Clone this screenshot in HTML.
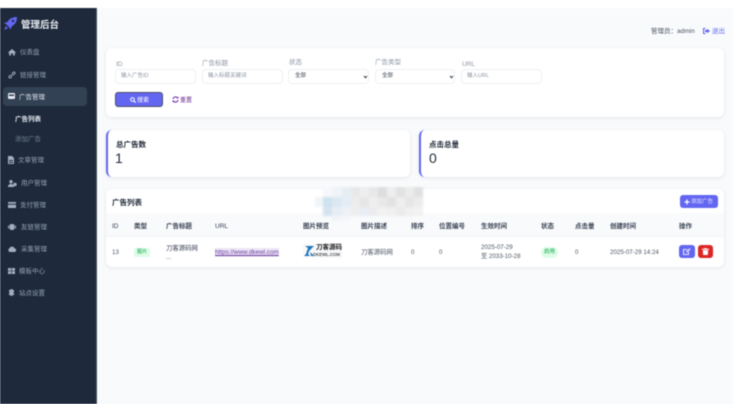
<!DOCTYPE html>
<html lang="zh"><head><meta charset="utf-8"><style>
*{box-sizing:border-box}
html,body{margin:0;padding:0;width:740px;height:404px;overflow:hidden;background:#fff}
body{font-family:"Liberation Sans","Noto Sans CJK SC",sans-serif;position:relative}
.a{position:absolute;white-space:nowrap}
#root{position:absolute;inset:0;filter:blur(.4px)}
.side{position:absolute;left:0;top:8px;width:97px;height:396px;background:#1e293b;border-right:1px solid #4b5563}
.main{position:absolute;left:97px;top:8px;width:636px;height:396px;background:#f8fafc}
.card{position:absolute;background:#fff;border-radius:6px;box-shadow:0 1px 4px rgba(0,0,0,.09)}
.nav{position:absolute;font-size:6.5px;line-height:10px;color:#94a3b8;white-space:nowrap}
.ic{position:absolute;fill:#a3afc0}
.lb{position:absolute;font-size:6.5px;color:#8b95a5;line-height:9px;white-space:nowrap}
.inp{position:absolute;top:69px;height:15px;background:#fff;border:1px solid #edf0f4;border-radius:4px;font-size:5.5px;line-height:13px;color:#8a93a0;padding-left:5px;white-space:nowrap}
.th{position:absolute;top:222px;font-size:6.5px;line-height:10px;color:#374151;font-weight:700;white-space:nowrap}
.td{position:absolute;font-size:6.2px;line-height:10px;color:#4b5563;white-space:nowrap}
</style></head><body><div id="root">
<div class="main"></div>
<div class="side"></div>

<svg class="a" style="left:3px;top:16px" width="15" height="15" viewBox="0 0 15 15"><path d="M14 1C9 1 6 3 4.500 6L1 7l2.500 1.500L6 11l1.500 2.500L9 10c3-1.500 5-4 5-9z" fill="#6366f1"/><circle cx="10" cy="5" r="1.200" fill="#1e293b"/><path d="M3 10l-2 4 4-2z" fill="#6366f1"/></svg>
<div class="a" style="left:21px;top:19px;font-size:9.500px;line-height:14px;color:#e8edf3;font-weight:700">管理后台</div>

<svg class="ic" style="left:8px;top:48px" width="8" height="8" viewBox="0 0 8 8"><path d="M4 1L0 4.500l.6.6L1.200 4.600V7.500H3V5.500H5V7.500H6.800V4.600l.6.500.6-.6z"/></svg>
<div class="nav" style="left:20px;top:48px">仪表盘</div>
<svg class="ic" style="left:8px;top:71px" width="8" height="8" viewBox="0 0 8 8"><path d="M3 5L5 3M2.500 4L1.300 5.200a1 1 0 0 0 1.500 1.500L4 5.500M4 2.500L5.200 1.300a1 1 0 0 1 1.500 1.500L5.500 4" fill="none" stroke="#a3afc0" stroke-width="1"/></svg>
<div class="nav" style="left:20px;top:71px">链接管理</div>

<div class="a" style="left:3px;top:87px;width:84px;height:19px;background:#334155;border-radius:4px"></div>
<svg class="a" style="left:8px;top:93px" width="7" height="6" viewBox="0 0 7 6"><rect width="7" height="6" rx="1" fill="#e5e9ef"/><rect x="1" y="1.500" width="5" height="1.500" fill="#334155"/></svg>
<div class="nav" style="left:19px;top:93px;color:#e2e8f0">广告管理</div>
<div class="nav" style="left:15px;top:115px;color:#e2e8f0;font-weight:700">广告列表</div>
<div class="nav" style="left:15px;top:135px;color:#6f7f95">添加广告</div>

<svg class="ic" style="left:8px;top:156px" width="6" height="8" viewBox="0 0 6 8"><path d="M0 0H4L6 2V8H0zM1 4V5H5V4zM1 6V7H5V6z"/></svg>
<div class="nav" style="left:18px;top:156px">文章管理</div>
<svg class="ic" style="left:8px;top:180px" width="9" height="7" viewBox="0 0 9 7"><circle cx="3" cy="1.700" r="1.700"/><path d="M0 7C0 4.500 1.500 4 3 4S6 4.500 6 7z"/><circle cx="7" cy="4.500" r="1.700"/></svg>
<div class="nav" style="left:21px;top:179px">用户管理</div>
<svg class="ic" style="left:8px;top:202px" width="8" height="6" viewBox="0 0 8 6"><path d="M0 0H8V1.800H0zM0 2.800H8V6H0z"/></svg>
<div class="nav" style="left:20px;top:201px">支付管理</div>
<svg class="ic" style="left:8px;top:224px" width="8" height="6" viewBox="0 0 8 6"><rect x="1.500" width="5" height="6" rx="2"/><rect y="1.500" width="1" height="3"/><rect x="7" y="1.500" width="1" height="3"/></svg>
<div class="nav" style="left:21px;top:223px">友链管理</div>
<svg class="ic" style="left:8px;top:246px" width="8" height="6" viewBox="0 0 8 6"><path d="M2 6A2 2 0 0 1 1.500 2.200 2.700 2.700 0 0 1 6.500 2.400 1.800 1.800 0 0 1 6.200 6z"/></svg>
<div class="nav" style="left:21px;top:245px">采集管理</div>
<svg class="ic" style="left:8px;top:268px" width="7" height="6" viewBox="0 0 7 6"><path d="M0 0H3.200V2.700H0zM3.800 0H7V2.700H3.800zM0 3.300H3.200V6H0zM3.800 3.300H7V6H3.800z"/></svg>
<div class="nav" style="left:19px;top:267px">模板中心</div>
<svg class="ic" style="left:8px;top:289px" width="7" height="7" viewBox="0 0 7 7"><path d="M2.800 0H4.200L4.500 1 5.600 .8 6.300 2 5.600 2.800V4.200L6.300 5 5.600 6.200 4.500 6 4.200 7H2.800L2.500 6 1.400 6.200 .7 5 1.400 4.200V2.800L.7 2 1.400 .8 2.500 1z"/></svg>
<div class="nav" style="left:19px;top:289px">站点设置</div>

<div class="a" style="left:651px;top:27px;font-size:6.500px;line-height:10px;color:#4b5563">管理员：admin</div>
<svg class="a" style="left:703px;top:28px" width="7" height="6" viewBox="0 0 7 6"><path d="M2.500 0H0V6H2.500V5H1V1H2.500zM4 .8L7 3 4 5.200V4H2V2H4z" fill="#6366f1"/></svg>
<div class="a" style="left:712px;top:27px;font-size:6.500px;line-height:10px;color:#6366f1">退出</div>

<div class="card" style="left:106px;top:48px;width:618px;height:69px"></div>
<div class="lb" style="left:116px;top:60px">ID</div>
<div class="lb" style="left:202px;top:59px">广告标题</div>
<div class="lb" style="left:289px;top:58px">状态</div>
<div class="lb" style="left:375px;top:58px">广告类型</div>
<div class="lb" style="left:462px;top:60px">URL</div>
<div class="inp" style="left:115px;width:81px">输入广告ID</div>
<div class="inp" style="left:202px;width:81px">输入标题关键词</div>
<div class="inp" style="left:288px;width:81px;color:#374151;padding-left:6px">全部</div>
<div class="inp" style="left:375px;width:80px;color:#374151;padding-left:6px">全部</div>
<div class="inp" style="left:461px;width:81px">输入URL</div>
<svg class="a" style="left:363px;top:75px" width="5" height="4" viewBox="0 0 5 4"><path d="M1 1L2.500 2.700 4 1" fill="none" stroke="#374151" stroke-width="1"/></svg>
<svg class="a" style="left:449px;top:75px" width="5" height="4" viewBox="0 0 5 4"><path d="M1 1L2.500 2.700 4 1" fill="none" stroke="#374151" stroke-width="1"/></svg>

<div class="a" style="left:115px;top:92px;width:48px;height:15px;background:#6366f1;border:1px solid #4a4f6a;border-bottom-width:1.500px;border-radius:3px"></div>
<svg class="a" style="left:130px;top:97px" width="6" height="6" viewBox="0 0 6 6"><circle cx="2.500" cy="2.500" r="1.800" fill="none" stroke="#fff" stroke-width="1"/><path d="M3.800 3.800L5.700 5.700" stroke="#fff" stroke-width="1.100"/></svg>
<div class="a" style="left:137px;top:96px;font-size:6px;line-height:10px;color:#fff">搜索</div>
<svg class="a" style="left:172px;top:96px" width="7" height="7" viewBox="0 0 7 7"><path d="M1 3A2.600 2.600 0 0 1 5.500 1.800M6 4A2.600 2.600 0 0 1 1.500 5.200" fill="none" stroke="#7c2fb0" stroke-width="1.100"/><path d="M4.500 2.500H6.500V.5zM2.500 4.500H.5V6.500z" fill="#7c2fb0"/></svg>
<div class="a" style="left:180px;top:96px;font-size:6px;line-height:10px;color:#6b2d90">重置</div>

<div class="card" style="left:106px;top:130px;width:304px;height:47px;border-left:2px solid #6366f1"></div>
<div class="a" style="left:116px;top:139px;font-size:7.500px;line-height:11px;color:#1f2937;font-weight:700">总广告数</div>
<div class="a" style="left:115px;top:150px;font-size:14px;line-height:17px;color:#1f2937">1</div>
<div class="card" style="left:419px;top:130px;width:305px;height:47px;border-left:2px solid #6366f1"></div>
<div class="a" style="left:429px;top:139px;font-size:7.500px;line-height:11px;color:#1f2937;font-weight:700">点击总量</div>
<div class="a" style="left:429px;top:150px;font-size:14px;line-height:17px;color:#1f2937">0</div>

<div class="card" style="left:106px;top:189px;width:618px;height:78px"></div>
<div class="a" style="left:106px;top:213px;width:618px;height:24px;background:#f8fafc;border-bottom:1px solid #f1f3f6"></div>

<svg class="a" style="left:314px;top:186px" width="112" height="36" viewBox="0 0 112 36"><defs><filter id="b" x="-5%" y="-10%" width="110%" height="120%"><feGaussianBlur stdDeviation="1"/></filter></defs><g filter="url(#b)">
<rect x="9" y="1" width="9" height="10" fill="#f6f8fb"/><rect x="18" y="1" width="10" height="10" fill="#f0f4f8"/><rect x="28" y="1" width="9" height="10" fill="#e6eef5"/><rect x="37" y="1" width="9" height="10" fill="#e8e8e8"/><rect x="46" y="1" width="9" height="10" fill="#eeeeee"/><rect x="55" y="1" width="9" height="10" fill="#e8e8e8"/><rect x="64" y="1" width="9" height="10" fill="#dedede"/><rect x="73" y="1" width="9" height="10" fill="#eeeeee"/><rect x="82" y="1" width="9" height="10" fill="#e2e2e2"/><rect x="91" y="1" width="9" height="10" fill="#ebebeb"/><rect x="100" y="1" width="9" height="10" fill="#e0e0e0"/>
<rect x="1" y="11" width="8" height="10" fill="#f1f5f9"/><rect x="9" y="11" width="9" height="10" fill="#cfe2f0"/><rect x="18" y="11" width="10" height="10" fill="#dbe8f2"/><rect x="28" y="11" width="9" height="10" fill="#e4edf5"/><rect x="37" y="11" width="9" height="10" fill="#ececec"/><rect x="46" y="11" width="9" height="10" fill="#e6e6e6"/><rect x="55" y="11" width="9" height="10" fill="#eeeeee"/><rect x="64" y="11" width="9" height="10" fill="#e8e8e8"/><rect x="73" y="11" width="9" height="10" fill="#e2e2e2"/><rect x="82" y="11" width="9" height="10" fill="#eeeeee"/><rect x="91" y="11" width="9" height="10" fill="#e6e6e6"/><rect x="100" y="11" width="9" height="10" fill="#ececec"/>
<rect x="9" y="21" width="9" height="9" fill="#d5e3ee"/><rect x="18" y="21" width="10" height="9" fill="#e6eef5"/><rect x="28" y="21" width="9" height="9" fill="#eef2f6"/><rect x="37" y="21" width="9" height="9" fill="#eeeeee"/><rect x="46" y="21" width="9" height="9" fill="#e8ecf5"/><rect x="55" y="21" width="9" height="9" fill="#ececec"/><rect x="64" y="21" width="9" height="9" fill="#f2f2f2"/><rect x="73" y="21" width="9" height="9" fill="#f0f0f0"/><rect x="82" y="21" width="9" height="9" fill="#ebebeb"/><rect x="91" y="21" width="9" height="9" fill="#f0f0f0"/><rect x="100" y="21" width="9" height="9" fill="#f2f2f2"/>
<rect x="18" y="30" width="10" height="5" fill="#f1f4f8"/><rect x="28" y="30" width="9" height="5" fill="#f4f6f8"/></g></svg>

<div class="a" style="left:112px;top:197px;font-size:7.500px;line-height:11px;color:#1f2937;font-weight:700">广告列表</div>
<div class="a" style="left:680px;top:195px;width:38px;height:13px;background:#6366f1;border-radius:3px"></div>
<svg class="a" style="left:684px;top:199px" width="6" height="6" viewBox="0 0 6 6"><path d="M3 .5V5.500M.5 3H5.500" stroke="#fff" stroke-width="1.200"/></svg>
<div class="a" style="left:691px;top:197px;font-size:5.500px;line-height:9px;color:#e6e7ff;margin-top:.5px">添加广告</div>

<div class="th" style="left:112px;font-weight:400">ID</div>
<div class="th" style="left:134px">类型</div>
<div class="th" style="left:166px">广告标题</div>
<div class="th" style="left:215px;font-weight:400">URL</div>
<div class="th" style="left:303px">图片预览</div>
<div class="th" style="left:361px">图片描述</div>
<div class="th" style="left:411px">排序</div>
<div class="th" style="left:439px">位置编号</div>
<div class="th" style="left:481px">生效时间</div>
<div class="th" style="left:541px">状态</div>
<div class="th" style="left:575px">点击量</div>
<div class="th" style="left:610px">创建时间</div>
<div class="th" style="left:679px">操作</div>

<div class="td" style="left:112px;top:248px">13</div>
<div class="a" style="left:134px;top:248px;width:16px;height:9px;background:#dcfce7;border-radius:2px;font-size:5px;line-height:9px;text-align:center;color:#16a34a">图片</div>
<div class="td" style="left:166px;top:244px;color:#374151;font-size:6.400px">刀客源码网</div>
<div class="td" style="left:166px;top:253px">...</div>
<div class="td" style="left:215px;top:248px;color:#6b3fa0;text-decoration:underline;background:#ece6f5;font-size:6.300px;line-height:9px">https://www.dkewl.com</div>

<svg class="a" style="left:303px;top:244px" width="40" height="14" viewBox="0 0 40 14"><rect width="40" height="14" rx="2" fill="#f7f8fa"/><path d="M2 2L5 4 3 10 1 12H7L5 10 8 2zM6 7L11 2H8zM7 8L11 12H8z" fill="#1d74b8"/></svg>
<div class="a" style="left:316px;top:244px;font-size:6.500px;line-height:8px;color:#222;font-weight:700">刀客源码</div>
<div class="a" style="left:313px;top:252px;font-size:4.300px;line-height:5px;color:#555;font-weight:700">DKEWL.COM</div>
<div class="td" style="left:361px;top:248px;font-size:6.400px">刀客源码网</div>
<div class="td" style="left:411px;top:248px">0</div>
<div class="td" style="left:439px;top:248px">0</div>
<div class="td" style="left:481px;top:243px">2025-07-29</div>
<div class="td" style="left:481px;top:252px">至 2033-10-28</div>
<div class="a" style="left:541px;top:247px;width:17px;height:11px;background:#dcfce7;border-radius:6px;font-size:5.500px;line-height:11px;text-align:center;color:#16a34a">启用</div>
<div class="td" style="left:575px;top:248px">0</div>
<div class="td" style="left:610px;top:248px">2025-07-29 14:24</div>
<div class="a" style="left:679px;top:245px;width:16px;height:13px;background:#6366f1;border-radius:3px"></div>
<svg class="a" style="left:683px;top:248px" width="8" height="7" viewBox="0 0 8 7"><path d="M0 1H4.500L3.700 2H1V6H5V4L6 3.200V7H0z" fill="#e6e7ff"/><path d="M3 4.500L3.300 3.200 6.500 .2 7.600 1.200 4.300 4.300z" fill="#e6e7ff"/></svg>
<div class="a" style="left:698px;top:245px;width:15px;height:13px;background:#dc2626;border-radius:3px"></div>
<svg class="a" style="left:702px;top:248px" width="7" height="7" viewBox="0 0 7 7"><path d="M0 .8H2.300L2.700 0H4.300L4.700 .8H7V1.800H0zM.8 2.300H6.200L5.800 7H1.200z" fill="#fff"/></svg>
</div></body></html>
